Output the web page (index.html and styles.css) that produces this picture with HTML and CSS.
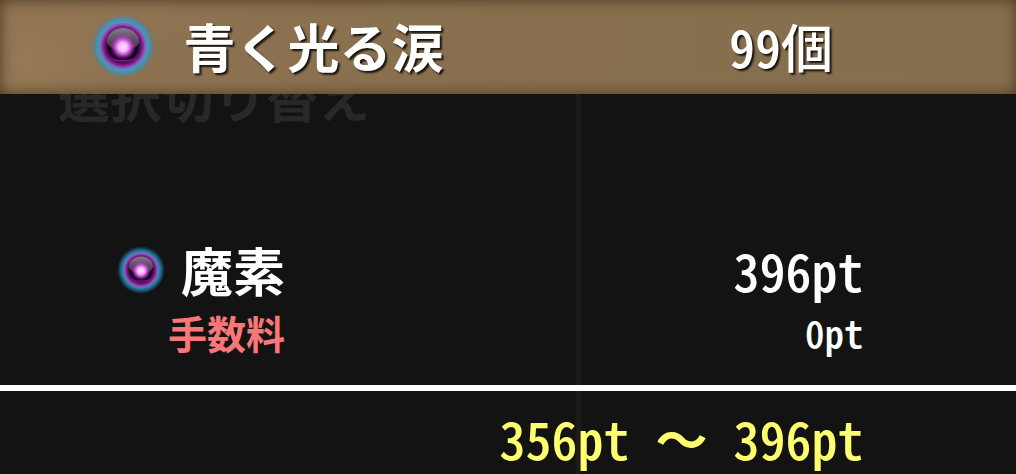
FILE: index.html
```html
<!DOCTYPE html>
<html lang="ja">
<head>
<meta charset="utf-8">
<meta name="viewport" content="width=device-width, initial-scale=1">
<title>青く光る涙</title>
<link rel="stylesheet" href="styles.css">
</head>
<body>
<svg class="defs" aria-hidden="true">
  <defs>
    <radialGradient id="halo">
      <stop offset="0" stop-color="#2ba4e6"/>
      <stop offset=".72" stop-color="#3a9fd4" stop-opacity=".9"/>
      <stop offset=".84" stop-color="#2d9bd6" stop-opacity=".6"/>
      <stop offset="1" stop-color="#1688c8" stop-opacity="0"/>
    </radialGradient>
    <radialGradient id="ball">
      <stop offset="0" stop-color="#2a0630"/>
      <stop offset=".66" stop-color="#17031d"/>
      <stop offset=".82" stop-color="#641672"/>
      <stop offset="1" stop-color="#a23cb4"/>
    </radialGradient>
    <radialGradient id="core">
      <stop offset="0" stop-color="#ffe6ff"/>
      <stop offset=".35" stop-color="#fbb4ff"/>
      <stop offset=".6" stop-color="#d85cec" stop-opacity=".85"/>
      <stop offset="1" stop-color="#8a1c9c" stop-opacity="0"/>
    </radialGradient>
    <linearGradient id="gloss" x2="0" y2="1">
      <stop offset="0" stop-color="#857b88"/>
      <stop offset="1" stop-color="#6c5c70" stop-opacity=".5"/>
    </linearGradient>
    <symbol id="orb" viewBox="0 0 64 64">
      <circle cx="32" cy="32" r="32" fill="url(#halo)"/>
      <circle cx="32" cy="32" r="22" fill="url(#ball)" stroke="#8f55b4" stroke-width="2"/>
      <path d="M18 43a16 9 0 0 0 28 0a16 6 0 0 1-28 0z" fill="#b01fc0" opacity=".7"/>
      <path d="M16 28a16 14 0 0 1 32 0q-2 8-16 8t-16-8z" fill="url(#gloss)"/>
      <circle cx="32" cy="33" r="13" fill="url(#core)"/>
    </symbol>
  </defs>
</svg>
<main class="panel">
  <header class="item">
    <svg class="orb" aria-hidden="true"><use href="#orb"/></svg>
    <h1 class="item-name">青く光る涙</h1>
    <span class="item-count">99個</span>
  </header>
  <div class="ghost">選択切り替え</div>
  <dl class="costs">
    <div class="row">
      <dt class="label"><svg class="orb orb-small" aria-hidden="true"><use href="#orb"/></svg>魔素</dt>
      <dd class="value">396pt</dd>
    </div>
    <div class="row row-fee">
      <dt class="label">手数料</dt>
      <dd class="value">0pt</dd>
    </div>
  </dl>
  <footer class="total"><span>356pt</span><span class="range">～</span><span>396pt</span></footer>
</main>
</body>
</html>
```
FILE: styles.css
```css
* { box-sizing: border-box; }

body {
  margin: 0;
  background: #131313;
  color: #fff;
  font-family: "Noto Sans CJK JP", sans-serif;
  font-feature-settings: "hwid";
  font-weight: 500;
  font-size: 52px;
  line-height: 56px;
}

.defs { position: absolute; width: 0; height: 0; }

.panel {
  min-height: 100vh;
  overflow: hidden;
  display: flex;
  flex-direction: column;
  background: linear-gradient(90deg, transparent 0 575px, #1d1c1a 577px 580px, transparent 582px);
}

.item {
  display: flex;
  align-items: center;
  height: 94px;
  padding: 0 18% 2px 9%;
  background:
    radial-gradient(ellipse 150px 30px at 120px 12px, #97795555, transparent),
    radial-gradient(ellipse 90px 60px at 30px 60px, #a0825b66, transparent),
    linear-gradient(90deg, #8f7352, #88704f 45%, #866f4e);
  box-shadow: inset 0 0 14px #4a3820;
  text-shadow: 2px 2px 2px #17120c;
}

.orb { flex: none; width: 64px; height: 64px; }
.orb-small { width: 48px; height: 48px; }

.item-name {
  margin: 0 auto 0 28px;
  font-size: inherit;
  font-weight: 700;
}

.ghost {
  display: flex;
  align-items: flex-end;
  height: 30px;
  overflow: hidden;
  padding-left: 58px;
  color: #282828;
  font-weight: 700;
}

.costs { margin: 0; padding: 118px 15% 25px 0; }

.row { display: flex; justify-content: space-between; }

.label {
  display: flex;
  align-items: center;
  justify-content: flex-end;
  gap: 16px;
  width: 33%;
  font-weight: 700;
}

.value { margin: 0; }

.row-fee { padding-top: 6px; font-size: 39px; }
.row-fee .label { color: #f87878; }

.total {
  flex: 1;
  display: flex;
  justify-content: flex-end;
  align-items: center;
  gap: 26px;
  padding: 10px 15% 0 0;
  border-top: 6px solid #fff;
  color: #ffff70;
}

.range { font-feature-settings: normal; font-weight: 700; }
```
